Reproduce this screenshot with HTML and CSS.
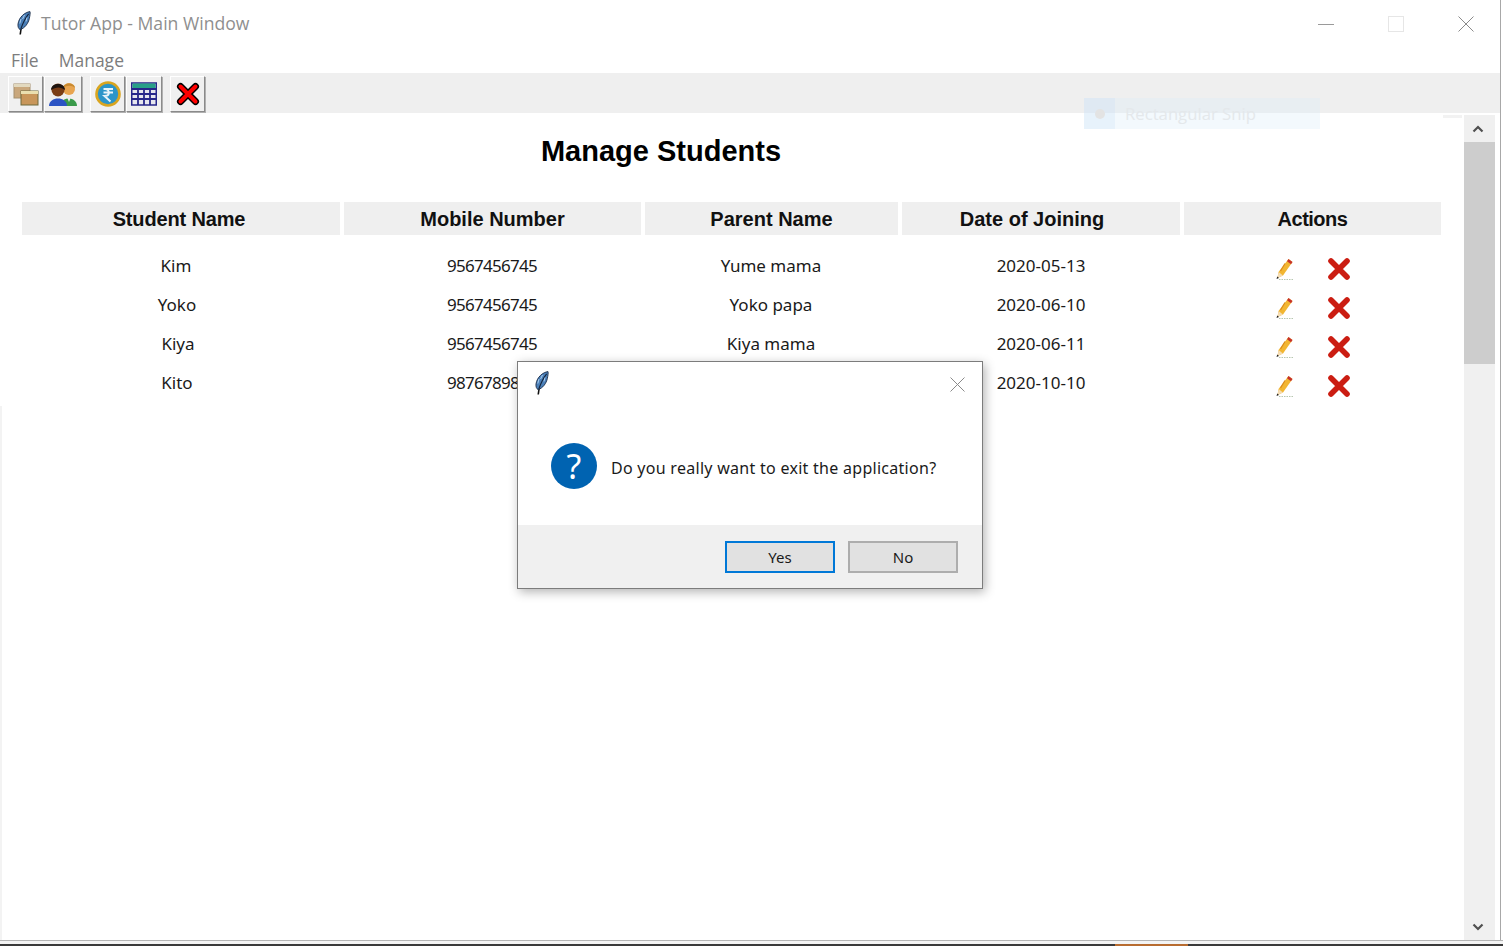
FILE: index.html
```html
<!DOCTYPE html>
<html lang="en">
<head>
<meta charset="utf-8">
<title>Tutor App - Main Window</title>
<link rel="stylesheet" href="styles.css">
</head>
<body>
<svg class="defs" width="0" height="0" aria-hidden="true">
  <defs>
    <symbol id="feather" viewBox="0 0 16 24">
      <path d="M4.2 23.5 L5.2 17" stroke="#111" stroke-width="1.6" fill="none"/>
      <path d="M14 0.6 C9 1.2 3 6 2 13 C1.7 15.5 2.4 17.6 4 18.6 C8.6 17.4 12.4 12.4 13.4 7.2 C13.9 4.6 14.4 2.2 14 0.6 Z" fill="#4a7fb8" stroke="#1c2d47" stroke-width="0.9"/>
      <path d="M12.6 2.8 C9.6 6.6 7.2 11 4.8 18" stroke="#14233a" stroke-width="1.1" fill="none"/>
      <path d="M5 8 L3.8 12.5 M11 6.5 L10 10.5 M8.5 4 L6.6 8" stroke="#a9cdef" stroke-width="1" fill="none"/>
    </symbol>
    <symbol id="pencil" viewBox="0 0 20 24">
      <path d="M14.5 2 L18.5 5 L9 18.5 L3.5 21 L4.5 15 Z" fill="#f2b632"/>
      <path d="M14.5 2 L18.5 5 L17 7.2 L13 4.2 Z" fill="#c6322b"/>
      <path d="M4.5 15 L9 18.5 L3.5 21 Z" fill="#f4dcb4"/>
      <path d="M3.2 19.6 L5 21 L2.6 22 Z" fill="#222"/>
      <path d="M11 6.5 L6.5 14" stroke="#d98a1c" stroke-width="1.2" fill="none"/>
      <path d="M5 22.5 H19" stroke="#b7c6b0" stroke-width="1" stroke-dasharray="1.5 1" fill="none"/>
    </symbol>
    <symbol id="cross" viewBox="0 0 24 24">
      <path d="M4 4 L20 20 M20 4 L4 20" stroke="#cb1d12" stroke-width="5.6" stroke-linecap="round" fill="none"/>
    </symbol>
  </defs>
</svg>

<div class="screen">
  <div class="window">
    <header class="titlebar">
      <svg class="title-icon"><use href="#feather"/></svg>
      <span class="title-text">Tutor App - Main Window</span>
      <div class="win-controls">
        <svg class="win-btn" viewBox="0 0 16 16"><path d="M0 8.5 H16" stroke="#9a9a9a" fill="none"/></svg>
        <svg class="win-btn" viewBox="0 0 16 16"><rect x="0.5" y="0.5" width="15" height="15" stroke="#e6e6e6" fill="none"/></svg>
        <svg class="win-btn" viewBox="0 0 16 16"><path d="M0.5 0.5 L15.5 15.5 M15.5 0.5 L0.5 15.5" stroke="#8a8a8a" fill="none"/></svg>
      </div>
    </header>

    <nav class="menubar">
      <span class="menu-item">File</span>
      <span class="menu-item">Manage</span>
    </nav>

    <div class="toolbar">
      <div class="tool-group">
        <button class="tool tool-a">
          <svg viewBox="0 0 26 24" width="26" height="24">
            <rect x="1" y="2" width="16" height="14" fill="#c9a77c" stroke="#a5906e"/>
            <rect x="1" y="2" width="16" height="3" fill="#e2d9bf"/>
            <rect x="8" y="9" width="17" height="14" fill="#c8965a" stroke="#6f6a3c"/>
            <rect x="8" y="9" width="17" height="3" fill="#eadfae"/>
          </svg>
        </button>
        <button class="tool tool-b">
          <svg viewBox="0 0 30 26" width="30" height="26">
            <circle cx="21" cy="8" r="6" fill="#e8a450"/>
            <path d="M15 7 C15 1 27 1 27 7 C24 4 19 4 15 7 Z" fill="#c98a30"/>
            <path d="M13 25 C12 15 29 15 29 25 Z" fill="#3a9a4a"/>
            <path d="M18.5 15 H23.5 L21 21 Z" fill="#eee"/>
            <circle cx="10" cy="9" r="6.5" fill="#7a3d16"/>
            <path d="M3 9 C3 1 17 1 17 9 C13 5.5 8 5.5 3 9 Z" fill="#1d1410"/>
            <path d="M1 25 C1 15 19 15 19 25 Z" fill="#2c54c4"/>
          </svg>
        </button>
      </div>
      <div class="tool-group">
        <button class="tool tool-c">
          <svg viewBox="0 0 26 26" width="26" height="26">
            <circle cx="13" cy="13" r="11.5" fill="#2b95c9" stroke="#d9a520" stroke-width="2.6"/>
            <path d="M8.5 8 H18 M8.5 11.5 H18 M10 8 C15 8 15.5 15 9.5 15 L15.5 20.5" stroke="#e8f4fa" stroke-width="2" fill="none"/>
          </svg>
        </button>
        <button class="tool tool-d">
          <svg viewBox="0 0 26 24" width="26" height="24">
            <rect x="0.75" y="1" width="24.5" height="22" fill="#e6e6ee" stroke="#26268a" stroke-width="1.5"/>
            <rect x="1.5" y="1.5" width="23" height="5" fill="#27a088"/>
            <path d="M1 7 H25 M1 12 H25 M1 17 H25 M7 7 V23 M13 7 V23 M19 7 V23" stroke="#26268a" stroke-width="1.8" fill="none"/>
          </svg>
        </button>
      </div>
      <button class="tool tool-e">
        <svg viewBox="0 0 24 24" width="24" height="24">
          <path d="M4.5 4.5 L19.5 19.5 M19.5 4.5 L4.5 19.5" stroke="#000" stroke-width="7" stroke-linecap="round" fill="none"/>
          <path d="M4.5 4.5 L19.5 19.5 M19.5 4.5 L4.5 19.5" stroke="#f00" stroke-width="4" stroke-linecap="round" fill="none"/>
        </svg>
      </button>
    </div>

    <div class="body">
      <main class="content">
        <h1 class="heading">Manage Students</h1>
        <div class="table-head">
          <div class="th th-name">Student Name</div>
          <div class="th">Mobile Number</div>
          <div class="th">Parent Name</div>
          <div class="th th-date">Date of Joining</div>
          <div class="th th-actions">Actions</div>
        </div>
        <div class="rows">
          <div class="row">
            <span class="td td-kim">Kim</span><span class="td td-mobile">9567456745</span><span class="td">Yume mama</span><span class="td">2020-05-13</span>
            <span class="actions"><svg class="ic-pencil"><use href="#pencil"/></svg><svg class="ic-cross"><use href="#cross"/></svg></span>
          </div>
          <div class="row">
            <span class="td">Yoko</span><span class="td td-mobile">9567456745</span><span class="td">Yoko papa</span><span class="td">2020-06-10</span>
            <span class="actions"><svg class="ic-pencil"><use href="#pencil"/></svg><svg class="ic-cross"><use href="#cross"/></svg></span>
          </div>
          <div class="row">
            <span class="td td-kiya">Kiya</span><span class="td td-mobile">9567456745</span><span class="td">Kiya mama</span><span class="td">2020-06-11</span>
            <span class="actions"><svg class="ic-pencil"><use href="#pencil"/></svg><svg class="ic-cross"><use href="#cross"/></svg></span>
          </div>
          <div class="row">
            <span class="td">Kito</span><span class="td td-mobile">9876789876</span><span class="td">Kito mama</span><span class="td">2020-10-10</span>
            <span class="actions"><svg class="ic-pencil"><use href="#pencil"/></svg><svg class="ic-cross"><use href="#cross"/></svg></span>
          </div>
        </div>
      </main>
      <aside class="scrollbar">
        <svg class="arrow" viewBox="0 0 12 8" width="12" height="8"><path d="M1.5 6.5 L6 2 L10.5 6.5" stroke="#505050" stroke-width="2.2" fill="none"/></svg>
        <div class="track"><div class="thumb"></div></div>
        <svg class="arrow" viewBox="0 0 12 8" width="12" height="8"><path d="M1.5 1.5 L6 6 L10.5 1.5" stroke="#505050" stroke-width="2.2" fill="none"/></svg>
      </aside>
    </div>
  </div>

  <div class="taskbar"><span class="task-active"></span></div>

  <span class="sliver-top"></span>
  <span class="sliver-left"></span>

  <div class="snip">
    <span class="snip-icon"><span class="snip-dot"></span></span>
    <span class="snip-text">Rectangular Snip</span>
  </div>

  <section class="dialog">
    <div class="dialog-top">
      <div class="dialog-head">
        <svg class="dialog-feather"><use href="#feather"/></svg>
        <svg class="dialog-close" viewBox="0 0 15 15"><path d="M0.5 0.5 L14.5 14.5 M14.5 0.5 L0.5 14.5" stroke="#8a8a8a" fill="none"/></svg>
      </div>
      <div class="dialog-msg">
        <span class="question">?</span>
        <span class="msg-text">Do you really want to exit the application?</span>
      </div>
    </div>
    <div class="dialog-foot">
      <button class="dlg-btn dlg-default">Yes</button>
      <button class="dlg-btn">No</button>
    </div>
  </section>
</div>
</body>
</html>
```
FILE: styles.css
```css
* { box-sizing: border-box; }
html, body { margin: 0; padding: 0; background: #fff; }
body { width: 1503px; height: 946px; overflow: hidden; font-family: "Noto Sans", "Open Sans", sans-serif; }
.defs { position: absolute; }
.screen { position: relative; width: 1503px; height: 946px; display: flex; flex-direction: column; background: #fff; }

.window { flex: none; width: 1501px; height: 940px; display: flex; flex-direction: column; border-right: 1px solid #a8a8a8; background: #fff; }

.titlebar { flex: none; height: 47px; display: flex; align-items: center; padding-left: 16px; }
.title-icon { width: 16px; height: 24px; margin-right: 9px; margin-top: -2px; }
.title-text { font-size: 17.6px; color: #8f8f8f; font-family: "Open Sans", sans-serif; margin-top: -1px; }
.win-controls { margin-left: auto; display: flex; gap: 54px; padding-right: 26px; }
.win-btn { width: 16px; height: 16px; display: block; }

.menubar { flex: none; height: 26px; display: flex; gap: 20px; padding-left: 11px; align-items: center; }
.menu-item { font-size: 17.5px; color: #7d7d7d; font-family: "Open Sans", sans-serif; margin-top: -1px; }

.toolbar { flex: none; height: 40px; background: #efefef; display: flex; gap: 8px; padding: 3px 0 0 8px; align-items: flex-start; }
.tool-group { display: flex; gap: 1px; }
.tool { width: 35px; height: 36px; padding: 0; display: flex; align-items: center; justify-content: center; background: #f0f0f0; border: 1px solid; border-color: #fff #8a8a8a #8a8a8a #fff; box-shadow: 1px 1px 0 #b0b0b0; }
.tool-b { width: 38px; }
.tool-d { width: 36px; }

.body { flex: 1; display: flex; min-height: 0; }
.content { flex: 1; padding: 0 0 0 22px; min-width: 0; }
.heading { margin: 20px 0 0; width: 1278px; text-align: center; font: bold 29px/36px "Liberation Sans", Arial, sans-serif; color: #000; }

.table-head { margin-top: 33px; width: 1420px; height: 33px; display: grid; grid-template-columns: 318px 297px 253px 278px 257px; column-gap: 4px; }
.th { background: #efefef; display: flex; align-items: center; justify-content: center; padding-top: 1px; font: bold 20px "Liberation Sans", Arial, sans-serif; color: #111; }
.th-name { padding-right: 4px; letter-spacing: -0.15px; }
.th-date { padding-right: 18px; }
.th-actions { letter-spacing: -0.5px; }

.rows { margin-top: 11px; width: 1420px; }
.row { height: 39px; display: grid; grid-template-columns: 310px 320px 238px 302px 250px; align-items: center; }
.td { text-align: center; font-size: 17px; color: #1a1a1a; font-family: "Noto Sans", sans-serif; }
.td-mobile { letter-spacing: -0.7px; }
.td-kim { padding-right: 2px; }
.td-kiya { padding-left: 2px; }
.actions { display: flex; align-items: center; gap: 33px; padding: 7px 0 0 82px; }
.ic-pencil { width: 20px; height: 24px; }
.ic-cross { width: 24px; height: 24px; }

.scrollbar { flex: none; width: 31px; margin: 2px 5px 0 0; background: #f0f0f0; display: flex; flex-direction: column; }
.arrow { flex: none; margin: 10px 0 9px 8px; }
.track { flex: 1; }
.thumb { height: 222px; background: #cdcdcd; }

.taskbar { flex: none; height: 6px; display: flex; align-items: flex-end; border-top: 1px solid #b5b5b5; background: #f4f4f4; }
.task-active { width: 100%; height: 2px; background: linear-gradient(to right, #3a3a3a 0 1115px, #b86c30 1115px 1188px, #3a3a3a 1188px); }

.sliver-top { position: absolute; left: 1443px; top: 115px; width: 19px; height: 3px; background: #f2f2f2; }
.sliver-left { position: absolute; left: 0; top: 406px; width: 2px; height: 534px; background: #f3f3f3; }

.snip { position: absolute; left: 1084px; top: 98px; width: 236px; height: 31px; display: flex; align-items: center; background: rgba(215, 235, 250, 0.3); }
.snip-icon { width: 31px; height: 31px; display: flex; align-items: center; justify-content: center; background: rgba(190, 220, 245, 0.22); }
.snip-dot { width: 10px; height: 10px; border-radius: 50%; background: #e3e3e3; }
.snip-text { margin-left: 10px; font-size: 16.7px; color: #e4e8eb; font-family: "Open Sans", sans-serif; }

.dialog { position: absolute; left: 517px; top: 361px; width: 466px; height: 228px; display: flex; flex-direction: column; background: #fff; border: 1px solid #7c7c7c; box-shadow: 2px 3px 10px rgba(0, 0, 0, 0.3); }
.dialog-top { flex: 1; }
.dialog-head { height: 43px; display: flex; justify-content: space-between; padding: 9px 17px 0 16px; }
.dialog-feather { width: 16px; height: 24px; }
.dialog-close { width: 15px; height: 15px; margin-top: 6px; }
.dialog-msg { display: flex; align-items: center; padding-left: 33px; height: 46px; margin-top: 38px; }
.question { flex: none; width: 46px; height: 46px; border-radius: 50%; background: #0063b1; color: #fff; font: 34px/46px "Noto Sans", sans-serif; text-align: center; }
.msg-text { margin-left: 14px; font-size: 16px; letter-spacing: 0.28px; color: #1a1a1a; padding-top: 3px; }
.dialog-foot { flex: none; height: 63px; background: #f0f0f0; display: flex; justify-content: flex-end; gap: 13px; padding: 16px 24px 0 0; }
.dlg-btn { width: 110px; height: 32px; padding: 0; background: #e1e1e1; border: 2px solid #adadad; font: 15px "Noto Sans", sans-serif; color: #1a1a1a; }
.dlg-default { border-color: #0078d7; }
```
